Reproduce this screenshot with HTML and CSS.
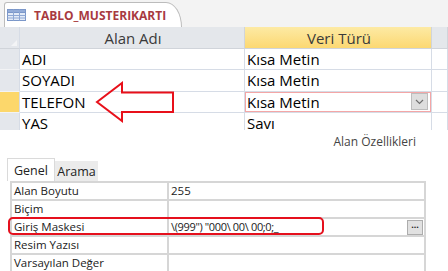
FILE: index.html
```html
<!DOCTYPE html>
<html lang="tr">
<head>
    <meta charset="UTF-8">
    <meta name="viewport" content="width=device-width, initial-scale=1.0">
    <title>TABLO_MUSTERIKARTI</title>
    <link rel="stylesheet" href="styles.css">
</head>
<body>
    <div class="screen">
        <div class="tabstrip">
            <div class="doc-tab">
                <svg class="tab-icon" width="19" height="12" viewBox="0 0 19 12">
                    <rect x="0.5" y="0.5" width="18" height="11" fill="#e3ebf7" stroke="#7b97c9"/>
                    <rect x="0.5" y="0.5" width="18" height="3" fill="#93acd8" stroke="#7b97c9"/>
                    <path d="M0.5 6.5H18.5M0.5 9H18.5M6.5 0.5V11.5M12.5 0.5V11.5" stroke="#8fa8d4" stroke-width="1"/>
                </svg>
                <span class="tab-title">TABLO_MUSTERIKARTI</span>
            </div>
        </div>

        <!-- tablo tasarim izgarasi -->
        <div class="sheet">
            <div class="sheet-row head">
                <div class="sel corner"><span class="corner-mark"></span></div>
                <div class="cell center">Alan Adı</div>
                <div class="cell center active-col">Veri Türü</div>
                <div class="cell rest"></div>
            </div>
            <div class="sheet-row">
                <div class="sel"></div>
                <div class="cell">ADI</div>
                <div class="cell">Kısa Metin</div>
                <div class="cell rest"></div>
            </div>
            <div class="sheet-row">
                <div class="sel"></div>
                <div class="cell">SOYADI</div>
                <div class="cell">Kısa Metin</div>
                <div class="cell rest"></div>
            </div>
            <div class="sheet-row current">
                <div class="sel"></div>
                <div class="cell">TELEFON</div>
                <div class="cell editing">
                    <span>Kısa Metin</span>
                    <span class="drop-btn">
                        <svg width="9" height="6" viewBox="0 0 9 6"><path d="M1 1L4.5 4.5L8 1" fill="none" stroke="#707070" stroke-width="1.2"/></svg>
                    </span>
                </div>
                <div class="cell rest"></div>
            </div>
            <div class="sheet-row">
                <div class="sel"></div>
                <div class="cell">YAS</div>
                <div class="cell">Savı</div>
                <div class="cell rest"></div>
            </div>
        </div>

        <div class="props-caption">Alan Özellikleri</div>

        <div class="prop-tabs">
            <div class="prop-tab selected">Genel</div>
            <div class="prop-tab">Arama</div>
        </div>

        <table class="props">
            <tr><td class="name">Alan Boyutu</td><td>255</td></tr>
            <tr><td class="name">Biçim</td><td></td></tr>
            <tr>
                <td class="name">Giriş Maskesi</td>
                <td>
                    <div class="value-line">
                        <span class="mask">\(999") "000\ 00\ 00;0;_</span>
                        <span class="dots-btn">···</span>
                    </div>
                </td>
            </tr>
            <tr><td class="name">Resim Yazısı</td><td></td></tr>
            <tr><td class="name">Varsayılan Değer</td><td></td></tr>
        </table>

        <!-- isaretler -->
        <svg class="arrow" width="82" height="44" viewBox="0 0 82 44">
            <path d="M2 21L27 2V11.5H78V31H27V40Z" fill="none" stroke="#e8101a" stroke-width="2" stroke-linejoin="miter"/>
        </svg>
        <div class="mark-box"></div>
    </div>
</body>
</html>
```

FILE: styles.css
```css
body {
    margin: 0;
    background: #ffffff;
    font-family: "Open Sans", "Noto Sans", sans-serif;
    overflow: hidden;
}
.screen {
    position: relative;
    width: 448px;
    height: 271px;
    overflow: hidden;
}
.tabstrip {
    height: 27px;
    background: #f3f3f3;
    display: flex;
    align-items: flex-end;
    padding-left: 4px;
    box-sizing: border-box;
}
.doc-tab {
    width: 178px;
    height: 25px;
    box-sizing: border-box;
    background: #ffffff;
    border: 1px solid #bcbcbc;
    border-bottom: none;
    border-radius: 3px 16px 0 0 / 3px 25px 0 0;
    display: flex;
    align-items: center;
    padding-left: 2px;
}
.tab-icon {
    margin-right: 8px;
    margin-top: -1px;
}
.tab-title {
    font-size: 12px;
    font-weight: bold;
    color: #a83a3f;
}
.sheet {
    height: 103px;
    overflow: hidden;
}
.sheet-row {
    display: grid;
    grid-template-columns: 20px 225px 187px 16px;
    height: 21.3px;
}
.sheet-row.head {
    height: 22px;
    background: #e4e7eb;
}
.cell {
    box-sizing: border-box;
    border-right: 1px solid #d6dce6;
    border-bottom: 1px solid #d6dce6;
    font-size: 15px;
    color: #000000;
    padding-left: 2px;
    display: flex;
    align-items: center;
    white-space: nowrap;
}
.head .cell {
    color: #3a3a3a;
    border-color: #d0d4da;
}
.center {
    justify-content: center;
}
.active-col {
    background: linear-gradient(#fdeaa4, #fcd872);
}
.sel {
    box-sizing: border-box;
    background: #e4e7ec;
    border-bottom: 1px solid #f2f3f5;
    border-right: 1px solid #d6dce6;
}
.corner {
    position: relative;
    border-bottom-color: #d0d4da;
}
.corner-mark {
    position: absolute;
    right: 2px;
    bottom: 2px;
    border-left: 6px solid transparent;
    border-bottom: 6px solid #f3f4f6;
}
.current .sel {
    background: #fcd76b;
}
.editing {
    box-shadow: inset 0 0 0 1px #f4a6a6;
    justify-content: space-between;
    padding-right: 3px;
}
.drop-btn {
    width: 17px;
    height: 17px;
    box-sizing: border-box;
    background: #dedede;
    border: 1px solid #bdbdbd;
    display: flex;
    align-items: center;
    justify-content: center;
}
.props-caption {
    height: 20px;
    padding: 3px 32px 0 0;
    box-sizing: border-box;
    text-align: right;
    font-size: 12px;
    line-height: 17px;
    color: #444444;
}
.prop-tabs {
    display: flex;
    align-items: flex-end;
    margin: 8px 0 0 7px;
    height: 23px;
}
.prop-tab {
    font-size: 12.5px;
    color: #222222;
    width: 43px;
    height: 20px;
    background: #ebebeb;
    display: flex;
    align-items: center;
    justify-content: center;
    box-sizing: border-box;
}
.prop-tab.selected {
    width: 48px;
    height: 23px;
    background: #ffffff;
    border: 1px solid #dadada;
    border-bottom: none;
}
.props {
    margin-left: 10px;
    width: 416px;
    border-collapse: collapse;
    border: 2px solid #d3d3d3;
}
.props td {
    height: 16px;
    padding: 0 2px;
    border: 2px solid #d6d6d6;
    font-size: 11.5px;
    line-height: 16px;
    color: #222222;
    white-space: nowrap;
}
.props td.name {
    width: 151px;
}
.value-line {
    display: flex;
    justify-content: space-between;
    align-items: center;
}
.mask {
    font-size: 11px;
    letter-spacing: -0.35px;
}
.dots-btn {
    width: 16px;
    height: 15px;
    box-sizing: border-box;
    background: #e1e1e1;
    border: 1px solid #adadad;
    font-size: 9px;
    font-weight: bold;
    line-height: 12px;
    text-align: center;
    margin-right: -1px;
}
.arrow {
    position: absolute;
    left: 95px;
    top: 81px;
}
.mark-box {
    position: absolute;
    left: 8px;
    top: 217px;
    width: 316px;
    height: 18px;
    box-sizing: border-box;
    border: 2px solid #e5101d;
    border-radius: 5px;
}
```
